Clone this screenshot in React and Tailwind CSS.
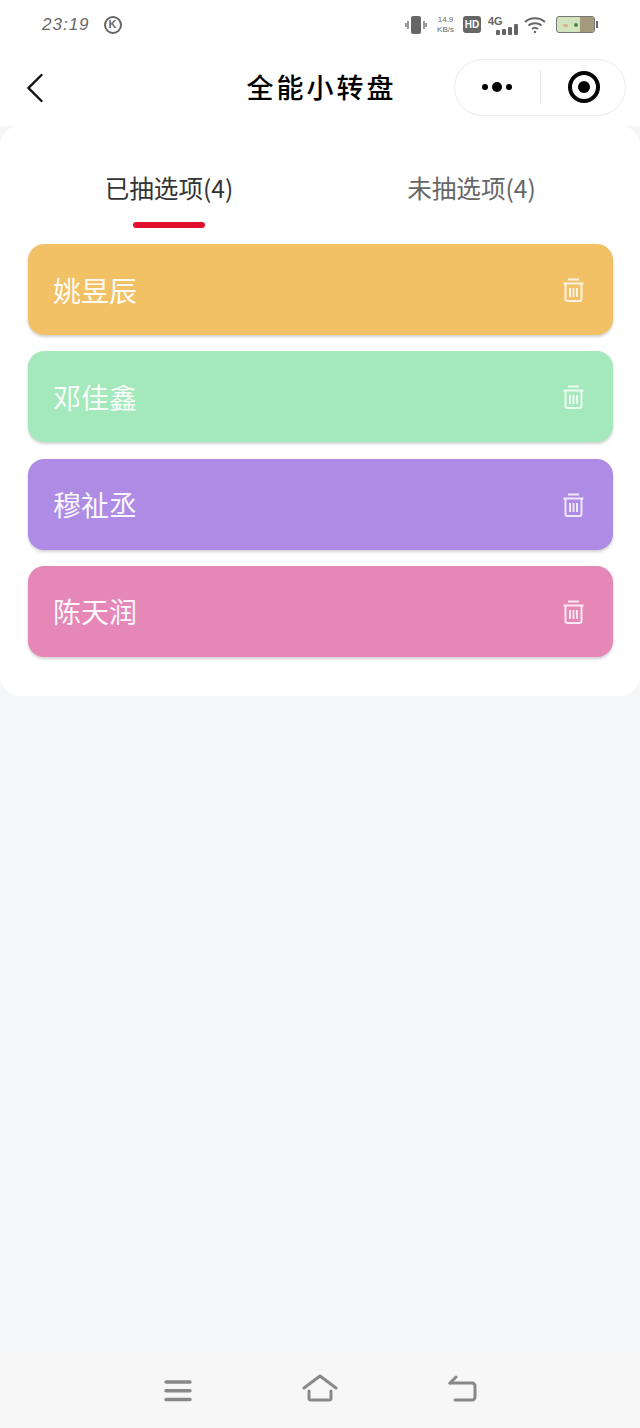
import React from "react";

const names = [
  { name: "姚昱辰", color: "bg-[#f2c166]" },
  { name: "邓佳鑫", color: "bg-[#a4e9bb]" },
  { name: "穆祉丞", color: "bg-[#ae8ce6]" },
  { name: "陈天润", color: "bg-[#e587b7]" },
];

const font = { fontFamily: '"Noto Sans CJK SC", Roboto, sans-serif' };

function Trash() {
  return (
    <svg width="21" height="24" viewBox="0 0 21 24" fill="none" stroke="#fff" strokeOpacity="0.8" strokeWidth="2" className="mt-[1px]">
      <path d="M5 1.500h11" />
      <path d="M0.500 5.500h20" />
      <path d="M2.500 5.500v15.500a2 2 0 0 0 2 2h12a2 2 0 0 0 2-2V5.500" />
      <path d="M7 10v9M10.500 10v9M14 10v9" />
    </svg>
  );
}

function StatusBar() {
  return (
    <div className="h-[48px] flex items-center justify-between pl-[42px] pr-[42px] pt-[1px]">
      <div className="flex items-center gap-[14px]">
        <span className="text-[17px] text-[#666] italic tracking-[1px] font-['Liberation_Sans',sans-serif]">23:19</span>
        <span className="w-[18px] h-[18px] rounded-full border-2 border-[#666] flex items-center justify-center text-[11px] font-bold text-[#666] font-['Liberation_Sans',sans-serif]">K</span>
      </div>
      <div className="flex items-center">
        <svg width="22" height="20" viewBox="0 0 22 20" className="mr-[10px]">
          <rect x="6" y="1" width="10" height="18" rx="2" fill="#666" />
          <path d="M3 6v8M1 8v4M19 6v8M21 8v4" stroke="#666" strokeWidth="1.300" />
        </svg>
        <div className="flex flex-col items-center text-[8px] leading-[10px] text-[#666] mr-[9px] font-['Liberation_Sans',sans-serif]">
          <span>14.9</span>
          <span>KB/s</span>
        </div>
        <span className="w-[18px] h-[17px] rounded-[3px] bg-[#666] text-white text-[10px] font-bold flex items-center justify-center mr-[7px] font-['Liberation_Sans',sans-serif]">HD</span>
        <div className="relative w-[30px] h-[20px] mr-[6px]">
          <span className="absolute left-0 top-[-2px] text-[11px] font-bold text-[#666] font-['Liberation_Sans',sans-serif]">4G</span>
          <svg width="22" height="12" viewBox="0 0 22 12" className="absolute left-[8px] top-[8px]">
            <rect x="0" y="7" width="4" height="5" rx="1" fill="#666" />
            <rect x="6" y="6" width="4" height="6" rx="1" fill="#666" />
            <rect x="12" y="4" width="4" height="8" rx="1" fill="#666" />
            <rect x="18" y="1" width="4" height="11" rx="1" fill="#666" />
          </svg>
        </div>
        <svg width="22" height="18" viewBox="0 0 22 18" fill="none" stroke="#666" strokeWidth="2" className="mr-[10px]">
          <path d="M1 6c5.500-5 14.500-5 20 0" />
          <path d="M4.500 9.500c3.500-3 9.500-3 13 0" />
          <path d="M8 13c1.800-1.500 4.200-1.500 6 0" />
          <circle cx="11" cy="16" r="1.200" fill="#666" stroke="none" />
        </svg>
        <div className="flex items-center">
          <div className="relative w-[39px] h-[17px] rounded-[3px] border border-[#777] bg-[#d3e4bd] overflow-hidden">
            <div className="absolute right-0 top-0 bottom-0 w-[14px] bg-[#a39b7c]" />
            <div className="absolute left-[6px] top-[7px] w-[5px] h-[3px] rounded-full bg-[#d8b48c]" />
            <div className="absolute left-[17px] top-[6px] w-[4px] h-[4px] rounded-full bg-[#4f8a4a]" />
          </div>
          <div className="w-[2px] h-[7px] bg-[#666] ml-[1px]" />
        </div>
      </div>
    </div>
  );
}

function NavBar() {
  return (
    <div className="h-[78px] relative flex items-center justify-between pl-[26px] pr-[14px]">
      <svg width="18" height="30" viewBox="0 0 18 30" fill="none" stroke="#111" strokeWidth="2.400" strokeLinecap="round" className="mt-[1px]">
        <path d="M15.500 2L2.500 15L15.500 28" />
      </svg>
      <span className="absolute left-0 right-0 pl-[3px] text-center text-[27px] font-medium text-black tracking-[3px]" style={font}>全能小转盘</span>
      <div className="relative w-[172px] h-[57px] rounded-full border border-[#ebebeb] flex items-center">
        <div className="w-[85px] flex items-center justify-center gap-[4px] pr-[2px]">
          <span className="w-[6px] h-[6px] rounded-full bg-black" />
          <span className="w-[10px] h-[10px] rounded-full bg-black" />
          <span className="w-[6px] h-[6px] rounded-full bg-black" />
        </div>
        <div className="w-px h-[34px] bg-[#e4e4e4]" />
        <div className="flex-1 flex items-center justify-center pl-[2px]">
          <div className="w-[32px] h-[32px] rounded-full border-[4px] border-black flex items-center justify-center">
            <span className="w-[12px] h-[12px] rounded-full bg-black" />
          </div>
        </div>
      </div>
    </div>
  );
}

export default function App() {
  return (
    <div className="w-[640px] h-[1428px] bg-[#f5f6f8] flex flex-col" style={font}>
      <div className="bg-white">
        <StatusBar />
        <NavBar />
      </div>

      <div className="h-[570px] bg-white rounded-[20px] pl-[28px] pr-[27px]">
        <div className="flex h-[118px]">
          <div className="w-[282px] flex flex-col items-center pt-[39px]">
            <span className="text-[24.600px] leading-[44px] text-[#333]">已抽选项(4)</span>
            <div className="w-[72px] h-[6px] rounded-full bg-[#e0102f] mt-[13px]" />
          </div>
          <div className="flex-1 flex flex-col items-center pt-[39px] pl-[20px]">
            <span className="text-[24.600px] leading-[44px] text-[#666]">未抽选项(4)</span>
          </div>
        </div>
        <div className="flex flex-col gap-[16.300px]">
          {names.map((item) => (
            <div
              key={item.name}
              className={`h-[91px] rounded-[16px] flex items-center justify-between pl-[25px] pr-[29px] text-white/95 text-[28px] shadow-[0_2px_3px_rgba(0,0,0,0.18)] ${item.color}`}
            >
              <span>{item.name}</span>
              <Trash />
            </div>
          ))}
        </div>
      </div>

      <div className="mt-auto h-[78px] bg-[#f7f7f7] flex items-start justify-between pl-[164px] pr-[163px] pt-[29px]">
        <svg width="28" height="24" viewBox="0 0 28 24" fill="none" stroke="#888" strokeWidth="3.400" strokeLinecap="round">
          <path d="M2 3h24M2 11.750h24M2 20.500h24" />
        </svg>
        <svg width="36" height="28" viewBox="0 0 36 28" fill="none" stroke="#888" strokeWidth="3" strokeLinecap="round" strokeLinejoin="round" className="-mt-[5px]">
          <path d="M2 14L18 2l16 12" />
          <path d="M7 17v7a2 2 0 0 0 2 2h18a2 2 0 0 0 2-2v-7" />
        </svg>
        <svg width="30" height="28" viewBox="0 0 30 28" fill="none" stroke="#888" strokeWidth="3" strokeLinecap="round" strokeLinejoin="round" className="-mt-[4px]">
          <path d="M3 8h22a3 3 0 0 1 3 3v11a3 3 0 0 1-3 3H8" />
          <path d="M9 2L3 8" />
        </svg>
      </div>
    </div>
  );
}
